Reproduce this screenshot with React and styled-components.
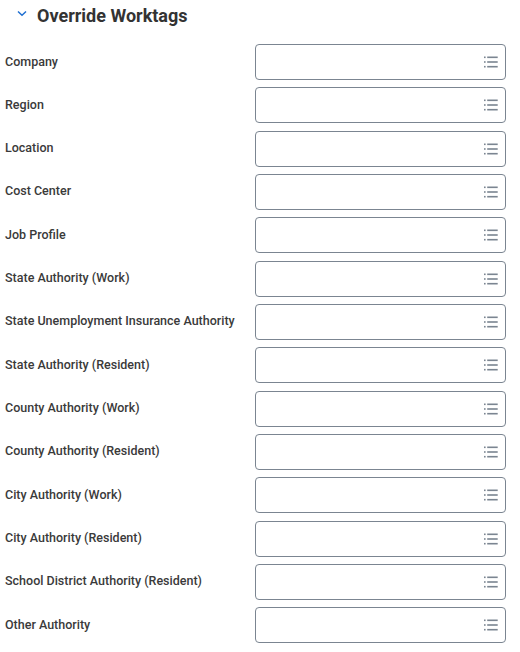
import React from 'react';
import styled, { createGlobalStyle } from 'styled-components';

const fields = [
    'Company',
    'Region',
    'Location',
    'Cost Center',
    'Job Profile',
    'State Authority (Work)',
    'State Unemployment Insurance Authority',
    'State Authority (Resident)',
    'County Authority (Work)',
    'County Authority (Resident)',
    'City Authority (Work)',
    'City Authority (Resident)',
    'School District Authority (Resident)',
    'Other Authority',
];

const GlobalStyle = createGlobalStyle`
    body {
        margin: 0;
        background: #fff;
        font-family: Roboto, "Liberation Sans", sans-serif;
        color: #333;
    }
`;

const ListIcon = () => (
    <svg width="14" height="12" viewBox="0 0 14 12" fill="none">
        <rect x="0" y="0.5" width="1.6" height="1.6" fill="#7b8591" />
        <rect x="0" y="5.2" width="1.6" height="1.6" fill="#7b8591" />
        <rect x="0" y="9.9" width="1.6" height="1.6" fill="#7b8591" />
        <rect x="3.2" y="0.5" width="10.5" height="1.6" fill="#7b8591" />
        <rect x="3.2" y="5.2" width="10.5" height="1.6" fill="#7b8591" />
        <rect x="3.2" y="9.9" width="10.5" height="1.6" fill="#7b8591" />
    </svg>
);

const Chevron = () => (
    <svg width="10" height="7" viewBox="0 0 10 7" fill="none">
        <path d="M1 1.5 L5 5.2 L9 1.5" stroke="#1f6fd1" strokeWidth="1.5" />
    </svg>
);

const App = () => (
    <>
        <GlobalStyle />
        <Section>
            <Header>
                <Toggle><Chevron /></Toggle>
                <Title>Override Worktags</Title>
            </Header>
            <FieldList>
                {fields.map((label) => (
                    <Row key={label}>
                        <Label>{label}</Label>
                        <Prompt>
                            <ListIcon />
                        </Prompt>
                    </Row>
                ))}
            </FieldList>
        </Section>
    </>
);

const Section = styled.section`
    width: 520px;
    padding: 0 0 0 5px;
    box-sizing: border-box;
`;

const Header = styled.div`
    display: flex;
    align-items: center;
    height: 30px;
`;

const Toggle = styled.span`
    display: flex;
    align-items: center;
    justify-content: center;
    width: 24px;
    margin-left: 5px;
    margin-right: 3px;
    padding-bottom: 3px;
`;

const Title = styled.h2`
    margin: 0;
    font-size: 18px;
    font-weight: 700;
    color: #333;
`;

const FieldList = styled.div`
    display: flex;
    flex-direction: column;
    gap: 7.33px;
    margin-top: 14px;
`;

const Row = styled.div`
    display: grid;
    grid-template-columns: 250px 251px;
    align-items: center;
`;

const Label = styled.span`
    font-size: 12.5px;
    font-weight: 500;
    color: #3a3a3a;
    margin-bottom: 2px;
`;

const Prompt = styled.div`
    height: 36px;
    box-sizing: border-box;
    border: 1px solid #7b8591;
    border-radius: 4px;
    display: flex;
    align-items: center;
    justify-content: flex-end;
    padding-right: 7px;
`;

export default App;
